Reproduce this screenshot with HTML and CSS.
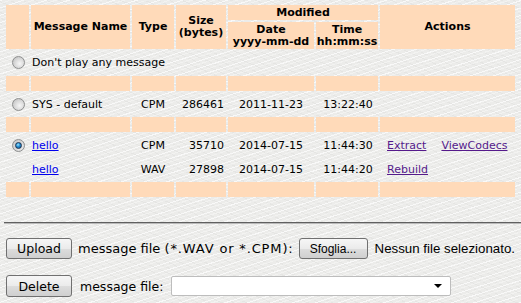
FILE: index.html
```html
<!DOCTYPE html>
<html>
<head>
<meta charset="utf-8">
<link rel="stylesheet" href="styles.css">
</head>
<body>
<div class="page">
  <table class="msgs">
    <colgroup>
      <col class="c-sel"><col class="c-name"><col class="c-type"><col class="c-size"><col class="c-date"><col class="c-time"><col class="c-act">
    </colgroup>
    <tr class="hrow1">
      <th rowspan="2"></th>
      <th rowspan="2">Message Name</th>
      <th rowspan="2">Type</th>
      <th rowspan="2">Size<br>(bytes)</th>
      <th colspan="2">Modified</th>
      <th rowspan="2">Actions</th>
    </tr>
    <tr class="hrow2">
      <th>Date<br>yyyy-mm-dd</th>
      <th>Time<br>hh:mm:ss</th>
    </tr>
    <tr class="drow first">
      <td class="sel"><span class="radio"></span></td>
      <td colspan="6" class="name">Don't play any message</td>
    </tr>
    <tr class="spacer"><td></td><td></td><td></td><td></td><td></td><td></td><td></td></tr>
    <tr class="drow">
      <td class="sel"><span class="radio"></span></td>
      <td class="name">SYS - default</td>
      <td class="type">CPM</td>
      <td class="size">286461</td>
      <td class="date">2011-11-23</td>
      <td class="time">13:22:40</td>
      <td class="act"></td>
    </tr>
    <tr class="spacer"><td></td><td></td><td></td><td></td><td></td><td></td><td></td></tr>
    <tr class="drow">
      <td class="sel"><span class="radio checked"></span></td>
      <td class="name"><a class="link" href="#">hello</a></td>
      <td class="type">CPM</td>
      <td class="size">35710</td>
      <td class="date">2014-07-15</td>
      <td class="time">11:44:30</td>
      <td class="act"><a class="link visited gap" href="#">Extract</a><a class="link visited" href="#">ViewCodecs</a></td>
    </tr>
    <tr class="drow">
      <td class="sel"></td>
      <td class="name"><a class="link" href="#">hello</a></td>
      <td class="type">WAV</td>
      <td class="size">27898</td>
      <td class="date">2014-07-15</td>
      <td class="time">11:44:20</td>
      <td class="act"><a class="link visited" href="#">Rebuild</a></td>
    </tr>
    <tr class="spacer"><td></td><td></td><td></td><td></td><td></td><td></td><td></td></tr>
  </table>
  <hr class="sep">
  <div class="frow up">
    <span class="btn b-upload">Upload</span>
    <span class="lbl">message file <span class="ext">(*.WAV or *.CPM):</span></span>
    <span class="btn b-browse">Sfoglia...</span>
    <span class="nofile">Nessun file selezionato.</span>
  </div>
  <div class="frow del">
    <span class="btn b-delete">Delete</span>
    <span class="lbl2">message file:</span>
    <span class="select"><span class="arrow"></span></span>
  </div>
</div>
</body>
</html>
```
FILE: styles.css
```css
html, body {
  margin: 0;
  padding: 0;
}
body {
  width: 521px;
  height: 303px;
  overflow: hidden;
  background-color: #ececea;
  background-image:
    repeating-linear-gradient(162deg, rgba(255,255,255,0.7) 0 1px, transparent 1px 3px, rgba(255,255,255,0.35) 3px 4px, transparent 4px 7px),
    repeating-linear-gradient(24deg, rgba(0,0,0,0.03) 0 1px, transparent 1px 5px);
  font-family: "DejaVu Sans", Verdana, sans-serif;
  font-size: 11px;
  color: #000;
}
.page {
  padding: 3px 0 0 4px;
}
.msgs {
  border-collapse: separate;
  border-spacing: 2px;
  table-layout: fixed;
  width: 513px;
}
.c-sel { width: 23px; }
.c-name { width: 99px; }
.c-type { width: 42px; }
.c-size { width: 50px; }
.c-date { width: 86px; }
.c-time { width: 62px; }
.c-act { width: 135px; }

.msgs th {
  background: #ffdab9;
  font-weight: bold;
  font-size: 11px;
  line-height: 12px;
  padding: 0;
  text-align: center;
  vertical-align: middle;
  white-space: nowrap;
}
.hrow1 th { height: 15px; }
.hrow2 th { height: 27px; }
.msgs td {
  padding: 0;
  height: 22px;
  white-space: nowrap;
  vertical-align: middle;
  line-height: 13px;
}
.drow.first td { height: 23px; }
.spacer td {
  background: #ffdab9;
  height: 15px;
}
.sel { text-align: center; }
.name { padding-left: 1px !important; }
.type { text-align: center; }
.size { text-align: right; padding-right: 2px !important; }
.date { text-align: center; }
.time { text-align: center; padding-left: 2px !important; }
.act { padding-left: 7px !important; }

.link {
  color: #0000ee;
  text-decoration: underline;
}
.link.visited { color: #551a8b; }
.link.gap { margin-right: 15px; }

.radio {
  display: inline-block;
  vertical-align: middle;
  width: 11px;
  height: 11px;
  border-radius: 50%;
  border: 1px solid #8e8f8f;
  background: radial-gradient(circle at 60% 60%, #f6f6f6 0, #dcdcdc 45%, #b9b9b9 100%);
  position: relative;
  margin-left: 1px;
}
.radio.checked::after {
  content: "";
  position: absolute;
  left: 2px;
  top: 2px;
  width: 5px;
  height: 5px;
  border-radius: 50%;
  border: 1px solid #1d3350;
  background: radial-gradient(circle at 40% 35%, #9fe6ff 0, #2a94d6 40%, #0b4a86 100%);
}

.sep {
  margin: 23px 0 0 0;
  height: 0;
  border: 0;
  border-top: 1px solid #606060;
  border-bottom: 1px solid #b9b9b9;
}
.frow {
  display: flex;
  align-items: center;
  font-size: 13px;
  padding-left: 2px;
  white-space: nowrap;
}
.frow.up { margin-top: 14px; height: 21px; }
.frow.del { margin-top: 16px; height: 22px; }
.btn {
  box-sizing: border-box;
  display: inline-flex;
  align-items: center;
  justify-content: center;
  flex: none;
  height: 21px;
  border: 1px solid #707070;
  border-radius: 3px;
  background: linear-gradient(#f6f6f6, #ebebeb 50%, #dddddd 51%, #cfcfcf);
  font-family: "DejaVu Sans", Verdana, sans-serif;
  font-size: 12.5px;
  color: #000;
}
.b-upload, .b-delete { width: 66px; }
.b-delete { height: 22px; }
.b-browse {
  width: 69px;
  font-family: "Liberation Sans", Arial, sans-serif;
  font-size: 12px;
  margin-left: 5px;
}
.lbl { margin-left: 6px; }
.ext { letter-spacing: 0.85px; }
.lbl2 {
  margin-left: 8px;
  font-size: 12.5px;
}
.nofile {
  margin-left: 7px;
  font-family: "Liberation Sans", Arial, sans-serif;
  font-size: 13.3px;
}
.select {
  box-sizing: border-box;
  flex: none;
  margin-left: 8px;
  width: 280px;
  height: 20px;
  background: #fff;
  border: 1px solid #bdbdbd;
  border-radius: 2px;
  position: relative;
}
.arrow {
  position: absolute;
  right: 8px;
  top: 7px;
  width: 0;
  height: 0;
  border-left: 4px solid transparent;
  border-right: 4px solid transparent;
  border-top: 4px solid #000;
}
```
